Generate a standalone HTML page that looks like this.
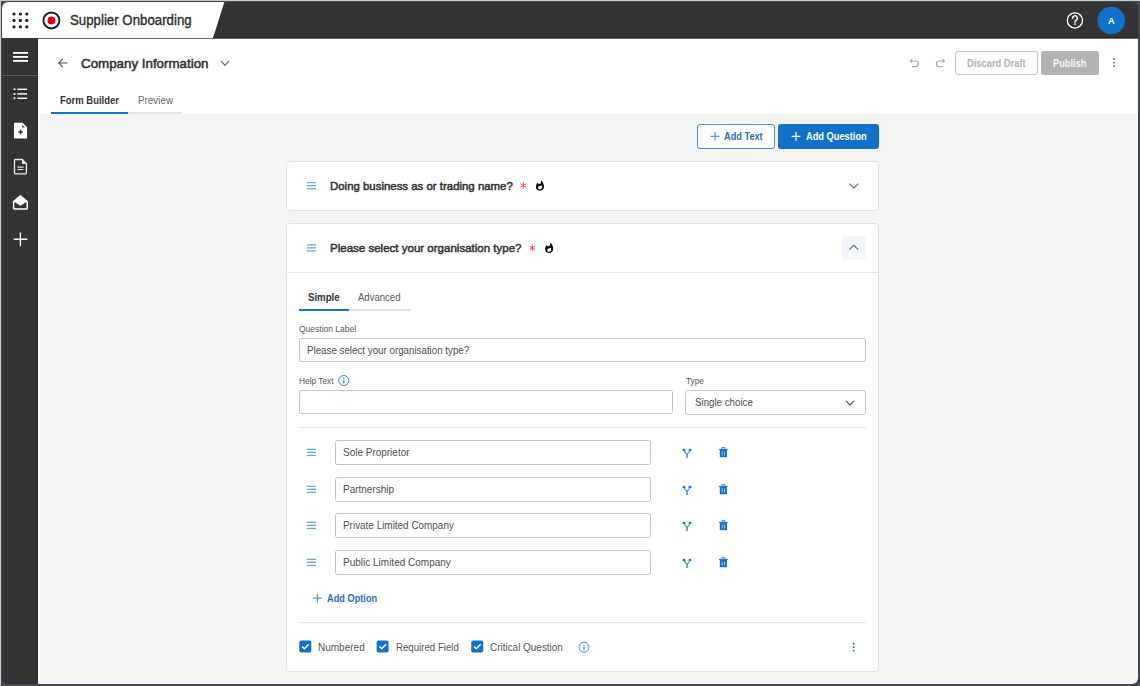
<!DOCTYPE html>
<html><head><meta charset="utf-8">
<style>
*{box-sizing:border-box;margin:0;padding:0}
html,body{width:1140px;height:686px;overflow:hidden}
body{background:#45484e;font-family:"Liberation Sans",sans-serif;position:relative;color:#333}
.a{position:absolute}
#edgeT{left:0;top:0;width:1140px;height:1px;background:#c3cad2}
#edgeL{left:0;top:0;width:1px;height:686px;background:#c3cad2}
#app{position:absolute;left:0;top:0;width:1140px;height:686px;clip-path:inset(2px 2px 2px 2px round 6px);background:#333}
#hdrW{left:0;top:0;width:240px;height:38px;background:#fff;clip-path:polygon(0 0,225px 0,213px 38px,0 38px)}
#hdrLine{left:0;top:38px;width:1140px;height:1px;background:#686868}
#hdrLine2{left:213px;top:37px;width:927px;height:1px;background:#2a2a2a}
#side{left:0;top:38px;width:38px;height:648px;background:#333;border-right:1px solid #2a2a2a}
#content{left:38px;top:39px;width:1100px;height:646px;background:#fff}
#gray{left:40px;top:114px;width:1097px;height:569px;background:#f5f5f5}
.t{position:absolute;white-space:nowrap;line-height:1;transform-origin:0 0}
svg{position:absolute;overflow:visible}
</style></head><body>
<div id="edgeT" class="a"></div><div id="edgeL" class="a"></div>
<div id="app">
  <div id="hdrW" class="a"></div>
  <div id="hdrLine" class="a"></div><div id="hdrLine2" class="a"></div>
  <div id="side" class="a"></div>
  <div id="content" class="a"></div>
  <div id="gray" class="a"></div>

  <!-- header left -->
  <svg style="left:0;top:0" width="60" height="38">
    <g fill="#1e1e1e">
      <circle cx="14" cy="14" r="1.6"/><circle cx="20.4" cy="14" r="1.6"/><circle cx="26.8" cy="14" r="1.6"/>
      <circle cx="14" cy="20.4" r="1.6"/><circle cx="20.4" cy="20.4" r="1.6"/><circle cx="26.8" cy="20.4" r="1.6"/>
      <circle cx="14" cy="26.8" r="1.6"/><circle cx="20.4" cy="26.8" r="1.6"/><circle cx="26.8" cy="26.8" r="1.6"/>
    </g>
    <circle cx="51.4" cy="20.4" r="8" fill="none" stroke="#17212b" stroke-width="2"/>
    <circle cx="51.4" cy="20.4" r="3.9" fill="#e3000f"/>
  </svg>

  <!-- header right -->
  <svg style="left:0;top:0" width="1140" height="38">
    <circle cx="1074.9" cy="20.45" r="7.6" fill="none" stroke="#fff" stroke-width="1.3"/>
    <path d="M1072.6 18.2a2.35 2.35 0 1 1 3.4 2.1c-.7.35-1 .8-1 1.5v.5" fill="none" stroke="#fff" stroke-width="1.5" stroke-linecap="round"/>
    <circle cx="1075" cy="24.1" r="0.9" fill="#fff"/>
    <circle cx="1111.2" cy="20.45" r="13.8" fill="#1170c8"/>
  </svg>

  <!-- sidebar icons -->
  <svg style="left:0;top:38px" width="38" height="230">
    <g fill="#fff">
      <rect x="13" y="14" width="15" height="1.8"/>
      <rect x="13" y="18" width="15" height="1.8"/>
      <rect x="13" y="22" width="15" height="1.8"/>
    </g>
    <rect x="0" y="37" width="38" height="1" fill="#5a5a5a"/>
    <g fill="#fff">
      <circle cx="14.5" cy="51.3" r="1"/><circle cx="14.5" cy="55.9" r="1"/><circle cx="14.5" cy="60.3" r="1"/>
      <rect x="17.3" y="50.6" width="9.8" height="1.4"/>
      <rect x="17.3" y="55.2" width="9.8" height="1.4"/>
      <rect x="17.3" y="59.6" width="9.8" height="1.4"/>
    </g>
    <path d="M14.9 84.7h7.7l4.5 4.5v10.3a0.9 0.9 0 0 1-0.9 0.9H14.9a0.9 0.9 0 0 1-0.9-0.9V85.6a0.9 0.9 0 0 1 0.9-0.9z" fill="#fff"/>
    <path d="M22.2 86.9l2.7 2.7h-2.7z" fill="#333"/>
    <path d="M20.5 91.7v4.6M18.2 94h4.6" stroke="#333" stroke-width="1.5"/>
    <path d="M15.4 121.5h6.8l4.2 4.2v9.3a0.9 0.9 0 0 1-0.9 0.9h-10.1a0.9 0.9 0 0 1-0.9-0.9v-12.6a0.9 0.9 0 0 1 0.9-0.9z" fill="none" stroke="#e8e8e8" stroke-width="1.35"/>
    <path d="M22 121.5l4.4 4.4h-4.4z" fill="#e8e8e8"/>
    <path d="M17.5 129.2h6M17.5 131.5h6" stroke="#e8e8e8" stroke-width="1.2"/>
    <path d="M13.6 163.6l6.8-5.8 6.8 5.8v6.6a0.9 0.9 0 0 1-0.9 0.9h-11.8a0.9 0.9 0 0 1-0.9-0.9z" fill="none" stroke="#fff" stroke-width="1.5" stroke-linejoin="round"/>
    <path d="M13.6 163.6l6.8-5.8 6.8 5.8-6.8 4.2z" fill="#fff"/>
    <path d="M20.4 194.4v13.8M13.7 201.3h13.6" stroke="#fff" stroke-width="1.4"/>
  </svg>

  <!-- content header icons -->
  <svg style="left:0;top:0" width="1140" height="160">
    <path d="M58.8 63h8.6M62.8 58.9L58.7 63l4.1 4.1" fill="none" stroke="#555" stroke-width="1.1"/>
    <path d="M221 61.2l4 4 4-4" fill="none" stroke="#5a5a5a" stroke-width="1.1"/>
    <path d="M911.2 61h4.4a2.6 2.6 0 0 1 0 5.6h-3.6" fill="none" stroke="#aaa" stroke-width="1.2"/>
    <path d="M909.5 61l2.7-2.6v5.2z" fill="#aaa"/>
    <path d="M943.6 61h-4.4a2.6 2.6 0 0 0 0 5.6h3.6" fill="none" stroke="#aaa" stroke-width="1.2"/>
    <path d="M945.2 61l-2.7-2.6v5.2z" fill="#aaa"/>
    <g fill="#1170c8"><circle cx="1114" cy="59" r="0.9"/><circle cx="1114" cy="62.6" r="0.9"/><circle cx="1114" cy="66.2" r="0.9"/></g>
  </svg>
  <div class="a" style="left:51px;top:112px;width:77px;height:2px;background:#1a73cc"></div>
  <div class="a" style="left:128px;top:112px;width:54px;height:2px;background:#e3e3e3"></div>
  <div class="a" style="left:954.5px;top:51px;width:83px;height:23.5px;border:1px solid #c4c4c4;border-radius:3px;background:#fff"></div>
  <div class="a" style="left:1041px;top:51px;width:58px;height:23.5px;border-radius:3px;background:#b3b3b3"></div>
  <div class="a" style="left:697px;top:124px;width:78px;height:24.5px;border:1px solid #4a8ad3;border-radius:3px;background:#fff"></div>
  <div class="a" style="left:778px;top:124px;width:100.5px;height:24.5px;border-radius:3px;background:#1170c8"></div>
  <svg style="left:0;top:0" width="1140" height="160">
    <path d="M715 132v8.8M710.6 136.4h8.8" stroke="#5b93d6" stroke-width="1.2"/>
    <path d="M796 132v8.8M791.6 136.4h8.8" stroke="#fff" stroke-width="1.2"/>
  </svg>

<div class="a" style="left:286px;top:161px;width:593px;height:50px;border:1px solid #e2e2e2;background:#fff;border-radius:4px;"></div>
<div class="a" style="left:286px;top:223px;width:593px;height:449px;border:1px solid #e2e2e2;background:#fff;border-radius:4px;"></div>
<div class="a" style="left:287px;top:272px;width:591px;height:1px;background:#e6e6e6"></div>
<div class="a" style="left:299px;top:309px;width:50.3px;height:2px;background:#1a73cc"></div>
<div class="a" style="left:349.3px;top:309px;width:61.4px;height:2px;background:#e2e2e2"></div>
<div class="a" style="left:299.2px;top:338.1px;width:566.4px;height:23.8px;border:1px solid #c4c4c4;background:#fff;border-radius:2.5px;"></div>
<div class="a" style="left:299.2px;top:389.5px;width:373.4px;height:24px;border:1px solid #c4c4c4;background:#fff;border-radius:2.5px;"></div>
<div class="a" style="left:684.9px;top:389.6px;width:180.7px;height:25.7px;border:1px solid #c4c4c4;background:#fff;border-radius:2.5px;"></div>
<div class="a" style="left:299px;top:427px;width:566.6px;height:1px;background:#e3e3e3"></div>
<div class="a" style="left:335px;top:440px;width:315.5px;height:24.5px;border:1px solid #c4c4c4;background:#fff;border-radius:2.5px;"></div>
<div class="a" style="left:335px;top:477px;width:315.5px;height:24.5px;border:1px solid #c4c4c4;background:#fff;border-radius:2.5px;"></div>
<div class="a" style="left:335px;top:513px;width:315.5px;height:24.5px;border:1px solid #c4c4c4;background:#fff;border-radius:2.5px;"></div>
<div class="a" style="left:335px;top:550px;width:315.5px;height:24.5px;border:1px solid #c4c4c4;background:#fff;border-radius:2.5px;"></div>
<div class="a" style="left:299px;top:622px;width:566.6px;height:1px;background:#e3e3e3"></div>
  <svg style="left:0;top:0" width="1140" height="686">
<rect x="306.8" y="182.00" width="9.2" height="1.3" fill="#6fa5dd"/><rect x="306.8" y="185.00" width="9.2" height="1.3" fill="#6fa5dd"/><rect x="306.8" y="188.10" width="9.2" height="1.3" fill="#6fa5dd"/>
<path d="M523.30 182.20L523.30 188.80M526.16 183.85L520.44 187.15M526.16 187.15L520.44 183.85" stroke="#ec2b38" stroke-width="0.85"/>
<path transform="translate(535.8,180.3)" fill="#111" fill-rule="evenodd" d="M1.6 2.4Q2.3 4.1 3.9 3.6Q5.4 3.0 5.5 0.2C7.3 1.8 8.4 4.2 8.2 6.7C8.0 9.0 6.3 10.5 4.2 10.5C1.9 10.5 0 8.8 0.1 6.4C0.1 4.7 0.8 3.3 1.6 2.4Z M6.0 5.2C6.3 6.4 6.3 7.6 5.7 8.4C5.0 9.2 3.6 9.4 2.8 8.8C2.0 8.1 2.1 6.9 2.9 6.3C3.8 5.6 5.0 5.7 6.0 5.2Z"/>
<path d="M849.4 183.6l4.45 4.45 4.45-4.45" fill="none" stroke="#5a5a5a" stroke-width="1.05"/>
<rect x="306.8" y="244.20" width="9.2" height="1.3" fill="#6fa5dd"/><rect x="306.8" y="247.20" width="9.2" height="1.3" fill="#6fa5dd"/><rect x="306.8" y="250.30" width="9.2" height="1.3" fill="#6fa5dd"/>
<path d="M532.30 244.50L532.30 251.10M535.16 246.15L529.44 249.45M535.16 249.45L529.44 246.15" stroke="#ec2b38" stroke-width="0.85"/>
<path transform="translate(545.0,242.6)" fill="#111" fill-rule="evenodd" d="M1.6 2.4Q2.3 4.1 3.9 3.6Q5.4 3.0 5.5 0.2C7.3 1.8 8.4 4.2 8.2 6.7C8.0 9.0 6.3 10.5 4.2 10.5C1.9 10.5 0 8.8 0.1 6.4C0.1 4.7 0.8 3.3 1.6 2.4Z M6.0 5.2C6.3 6.4 6.3 7.6 5.7 8.4C5.0 9.2 3.6 9.4 2.8 8.8C2.0 8.1 2.1 6.9 2.9 6.3C3.8 5.6 5.0 5.7 6.0 5.2Z"/>
<rect x="842" y="236" width="23.6" height="23.6" rx="3" fill="#f2f5fa"/>
<path d="M849.4 249.6l4.4-4.4 4.4 4.4" fill="none" stroke="#5a5a5a" stroke-width="1.05"/>
<circle cx="343.8" cy="380.5" r="5.0" fill="none" stroke="#3a87d6" stroke-width="1"/><circle cx="343.8" cy="378.20" r="0.7" fill="#3a87d6"/><path d="M343.8 379.70V383.40" stroke="#3a87d6" stroke-width="1.1"/>
<path d="M846 400.9l3.95 3.95 3.95-3.95" fill="none" stroke="#444" stroke-width="1.1"/>
<rect x="306.8" y="448.70" width="9.2" height="1.3" fill="#6fa5dd"/><rect x="306.8" y="451.70" width="9.2" height="1.3" fill="#6fa5dd"/><rect x="306.8" y="454.80" width="9.2" height="1.3" fill="#6fa5dd"/>
<g transform="translate(0,0.0)"><path d="M684 450.2C684.1 452.6 687 452.9 687 455.2M690 450.2C689.9 452.6 687 452.9 687 455.2" fill="none" stroke="#1170c8" stroke-width="1.05" opacity="0.75"/><path d="M687 454.4V458" stroke="#1170c8" stroke-width="1.8" opacity="0.65"/><path d="M681.9 450.2L684 448.4 686.1 450.2 684 450.9Z M687.9 450.2L690 448.4 692.1 450.2 690 450.9Z" fill="#1170c8"/></g>
<g transform="translate(719.0,447.3)"><path d="M0 1.6H8.8V2.6H0z" fill="#1170c8"/><path d="M2.9 1.6V0.4H5.9V1.6" fill="none" stroke="#1170c8" stroke-width="0.9"/><path d="M0.8 2.6H8V9.9H0.8z" fill="#1170c8"/><path d="M3.2 4.1V8.2M5.6 4.1V8.2" stroke="#cfe0f3" stroke-width="0.8"/></g>
<rect x="306.8" y="485.70" width="9.2" height="1.3" fill="#6fa5dd"/><rect x="306.8" y="488.70" width="9.2" height="1.3" fill="#6fa5dd"/><rect x="306.8" y="491.80" width="9.2" height="1.3" fill="#6fa5dd"/>
<g transform="translate(0,37.0)"><path d="M684 450.2C684.1 452.6 687 452.9 687 455.2M690 450.2C689.9 452.6 687 452.9 687 455.2" fill="none" stroke="#1170c8" stroke-width="1.05" opacity="0.75"/><path d="M687 454.4V458" stroke="#1170c8" stroke-width="1.8" opacity="0.65"/><path d="M681.9 450.2L684 448.4 686.1 450.2 684 450.9Z M687.9 450.2L690 448.4 692.1 450.2 690 450.9Z" fill="#1170c8"/></g>
<g transform="translate(719.0,484.3)"><path d="M0 1.6H8.8V2.6H0z" fill="#1170c8"/><path d="M2.9 1.6V0.4H5.9V1.6" fill="none" stroke="#1170c8" stroke-width="0.9"/><path d="M0.8 2.6H8V9.9H0.8z" fill="#1170c8"/><path d="M3.2 4.1V8.2M5.6 4.1V8.2" stroke="#cfe0f3" stroke-width="0.8"/></g>
<rect x="306.8" y="521.70" width="9.2" height="1.3" fill="#6fa5dd"/><rect x="306.8" y="524.70" width="9.2" height="1.3" fill="#6fa5dd"/><rect x="306.8" y="527.80" width="9.2" height="1.3" fill="#6fa5dd"/>
<g transform="translate(0,73.00000000000006)"><path d="M684 450.2C684.1 452.6 687 452.9 687 455.2M690 450.2C689.9 452.6 687 452.9 687 455.2" fill="none" stroke="#1170c8" stroke-width="1.05" opacity="0.75"/><path d="M687 454.4V458" stroke="#1170c8" stroke-width="1.8" opacity="0.65"/><path d="M681.9 450.2L684 448.4 686.1 450.2 684 450.9Z M687.9 450.2L690 448.4 692.1 450.2 690 450.9Z" fill="#1170c8"/></g>
<g transform="translate(719.0,520.3)"><path d="M0 1.6H8.8V2.6H0z" fill="#1170c8"/><path d="M2.9 1.6V0.4H5.9V1.6" fill="none" stroke="#1170c8" stroke-width="0.9"/><path d="M0.8 2.6H8V9.9H0.8z" fill="#1170c8"/><path d="M3.2 4.1V8.2M5.6 4.1V8.2" stroke="#cfe0f3" stroke-width="0.8"/></g>
<rect x="306.8" y="558.70" width="9.2" height="1.3" fill="#6fa5dd"/><rect x="306.8" y="561.70" width="9.2" height="1.3" fill="#6fa5dd"/><rect x="306.8" y="564.80" width="9.2" height="1.3" fill="#6fa5dd"/>
<g transform="translate(0,110.00000000000006)"><path d="M684 450.2C684.1 452.6 687 452.9 687 455.2M690 450.2C689.9 452.6 687 452.9 687 455.2" fill="none" stroke="#1170c8" stroke-width="1.05" opacity="0.75"/><path d="M687 454.4V458" stroke="#1170c8" stroke-width="1.8" opacity="0.65"/><path d="M681.9 450.2L684 448.4 686.1 450.2 684 450.9Z M687.9 450.2L690 448.4 692.1 450.2 690 450.9Z" fill="#1170c8"/></g>
<g transform="translate(719.0,557.3)"><path d="M0 1.6H8.8V2.6H0z" fill="#1170c8"/><path d="M2.9 1.6V0.4H5.9V1.6" fill="none" stroke="#1170c8" stroke-width="0.9"/><path d="M0.8 2.6H8V9.9H0.8z" fill="#1170c8"/><path d="M3.2 4.1V8.2M5.6 4.1V8.2" stroke="#cfe0f3" stroke-width="0.8"/></g>
<path d="M317.4 593.7v9M312.9 598.2h9" stroke="#5b93d6" stroke-width="1.2"/>
<rect x="299.3" y="640.4" width="12" height="12.2" rx="2" fill="#1170c8"/><path d="M302.1 646.6l2.3 2.2 4.3-4.6" fill="none" stroke="#fff" stroke-width="1.5"/>
<rect x="376.6" y="640.4" width="12" height="12.2" rx="2" fill="#1170c8"/><path d="M379.40000000000003 646.6l2.3 2.2 4.3-4.6" fill="none" stroke="#fff" stroke-width="1.5"/>
<rect x="471.2" y="640.4" width="12" height="12.2" rx="2" fill="#1170c8"/><path d="M474.0 646.6l2.3 2.2 4.3-4.6" fill="none" stroke="#fff" stroke-width="1.5"/>
<circle cx="584.0" cy="647.2" r="5.0" fill="none" stroke="#3a87d6" stroke-width="1"/><circle cx="584.0" cy="644.90" r="0.7" fill="#3a87d6"/><path d="M584.0 646.40V650.10" stroke="#3a87d6" stroke-width="1.1"/>
<circle cx="853.7" cy="643.8" r="0.95" fill="#1170c8"/>
<circle cx="853.7" cy="647.3" r="0.95" fill="#1170c8"/>
<circle cx="853.7" cy="650.6" r="0.95" fill="#1170c8"/>
  </svg>
<div class="t" style="left:70.00px;top:14px;font-size:13.91px;font-weight:normal;color:#2b2b2b;transform:scaleX(0.9536);-webkit-text-stroke:0.35px #2b2b2b;">Supplier Onboarding</div>
<div class="t" style="left:81.40px;top:57px;font-size:13.62px;font-weight:normal;color:#2e2e2e;transform:scaleX(0.9797);-webkit-text-stroke:0.5px #2e2e2e;">Company Information</div>
<div class="t" style="left:59.90px;top:96px;font-size:10.00px;font-weight:bold;color:#333;transform:scaleX(0.9465);">Form Builder</div>
<div class="t" style="left:137.60px;top:96px;font-size:10.00px;font-weight:normal;color:#666;transform:scaleX(0.9841);">Preview</div>
<div class="t" style="left:966.80px;top:59px;font-size:10.43px;font-weight:bold;color:#b3b3b3;transform:scaleX(0.8958);">Discard Draft</div>
<div class="t" style="left:1053.40px;top:59px;font-size:10.43px;font-weight:bold;color:#f7f7f7;transform:scaleX(0.8890);">Publish</div>
<div class="t" style="left:1107.90px;top:16px;font-size:9.86px;font-weight:bold;color:#fff;transform:scaleX(0.9414);">A</div>
<div class="t" style="left:724.20px;top:131px;font-size:10.72px;font-weight:bold;color:#2d6bb8;transform:scaleX(0.8584);">Add Text</div>
<div class="t" style="left:805.60px;top:131px;font-size:10.72px;font-weight:bold;color:#fff;transform:scaleX(0.8648);">Add Question</div>
<div class="t" style="left:330.00px;top:181px;font-size:11.45px;font-weight:normal;color:#303030;transform:scaleX(0.9984);-webkit-text-stroke:0.5px #303030;">Doing business as or trading name?</div>
<div class="t" style="left:330.00px;top:242px;font-size:11.74px;font-weight:normal;color:#303030;transform:scaleX(0.9820);-webkit-text-stroke:0.5px #303030;">Please select your organisation type?</div>
<div class="t" style="left:308.40px;top:292px;font-size:10.58px;font-weight:bold;color:#333;transform:scaleX(0.9109);">Simple</div>
<div class="t" style="left:358.40px;top:292px;font-size:10.58px;font-weight:normal;color:#555;transform:scaleX(0.9032);">Advanced</div>
<div class="t" style="left:299.10px;top:325px;font-size:9.13px;font-weight:normal;color:#555;transform:scaleX(0.9313);">Question Label</div>
<div class="t" style="left:306.70px;top:345px;font-size:10.72px;font-weight:normal;color:#4d4d4d;transform:scaleX(0.9105);">Please select your organisation type?</div>
<div class="t" style="left:299.40px;top:377px;font-size:9.28px;font-weight:normal;color:#555;transform:scaleX(0.8988);">Help Text</div>
<div class="t" style="left:685.80px;top:377px;font-size:9.28px;font-weight:normal;color:#555;transform:scaleX(0.8951);">Type</div>
<div class="t" style="left:695.10px;top:397px;font-size:10.87px;font-weight:normal;color:#4d4d4d;transform:scaleX(0.8955);">Single choice</div>
<div class="t" style="left:342.60px;top:448px;font-size:10.43px;font-weight:normal;color:#4d4d4d;transform:scaleX(0.9569);">Sole Proprietor</div>
<div class="t" style="left:342.60px;top:485px;font-size:10.43px;font-weight:normal;color:#4d4d4d;transform:scaleX(0.9557);">Partnership</div>
<div class="t" style="left:342.60px;top:521px;font-size:10.43px;font-weight:normal;color:#4d4d4d;transform:scaleX(0.9522);">Private Limited Company</div>
<div class="t" style="left:342.60px;top:558px;font-size:10.43px;font-weight:normal;color:#4d4d4d;transform:scaleX(0.9599);">Public Limited Company</div>
<div class="t" style="left:326.90px;top:594px;font-size:10.43px;font-weight:bold;color:#2d6bb8;transform:scaleX(0.8839);">Add Option</div>
<div class="t" style="left:317.90px;top:643px;font-size:10.14px;font-weight:normal;color:#555;transform:scaleX(0.9880);">Numbered</div>
<div class="t" style="left:395.60px;top:643px;font-size:10.14px;font-weight:normal;color:#555;transform:scaleX(0.9549);">Required Field</div>
<div class="t" style="left:489.90px;top:643px;font-size:10.14px;font-weight:normal;color:#555;transform:scaleX(0.9809);">Critical Question</div>
</div>
</body></html>
